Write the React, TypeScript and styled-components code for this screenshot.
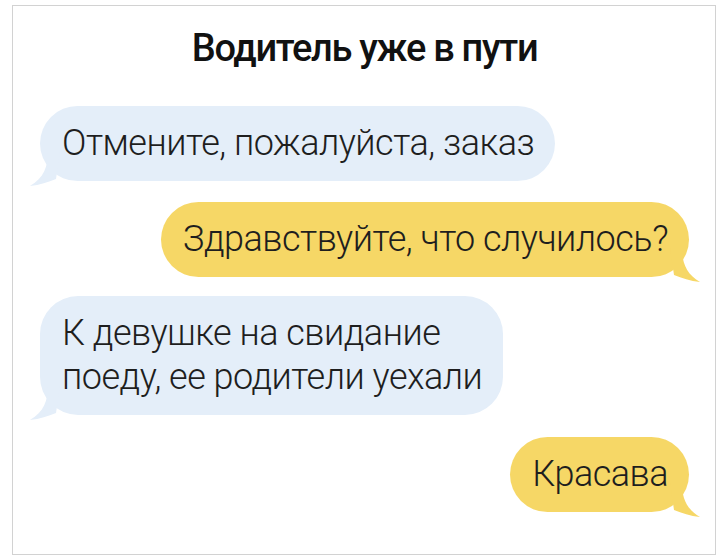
import React from "react";
import styled, { createGlobalStyle } from "styled-components";

const Global = createGlobalStyle`
  html, body { margin: 0; padding: 0; background: #ffffff; }
  body { font-family: Roboto, "Noto Sans", sans-serif; color: #1d1d1d; }
`;

const Frame = styled.div`
  box-sizing: border-box;
  margin: 5px 0 0 12px;
  width: 704px;
  height: 550px;
  border: 1px solid #d2d2d2;
  display: flex;
  flex-direction: column;
  padding: 0 26px 0 27px;
`;

const Title = styled.h1`
  margin: 20px 0 0;
  font-family: Roboto, sans-serif;
  font-weight: 500;
  font-size: 38px;
  line-height: 44px;
  text-align: center;
  color: #111;
  letter-spacing: -1.3px;
`;

const Thread = styled.div`
  display: flex;
  flex-direction: column;
  margin-top: 36px;
`;

type Side = "in" | "out";

const Row = styled.div<{ $side: Side; $gap: number }>`
  display: flex;
  justify-content: ${(p) => (p.$side === "in" ? "flex-start" : "flex-end")};
  margin-top: ${(p) => p.$gap}px;
`;

const Bubble = styled.div<{ $side: Side }>`
  position: relative;
  background: ${(p) => (p.$side === "in" ? "#e4eef9" : "#f6d766")};
  border-radius: 38px;
  padding: 15px 21px 16px 22px;
  font-family: Roboto, sans-serif;
  font-weight: 300;
  font-size: 36px;
  line-height: 44px;
  letter-spacing: -0.5px;
  color: #1e1e1e;
`;

const TailSvg = styled.svg<{ $side: Side }>`
  position: absolute;
  bottom: -5px;
  width: 30px;
  height: 34px;
  ${(p) => (p.$side === "in" ? "left: -10px;" : "right: -11px; transform: scaleX(-1);")}
`;

const Tail = ({ side, color }: { side: Side; color: string }) => (
  <TailSvg $side={side} viewBox="0 0 30 34">
    <path
      d="M18 0 C 18 14, 14 26, 0 34 C 10 33, 18 30, 26 27 L 30 0 Z"
      fill={color}
    />
  </TailSvg>
);

const msgs: { side: Side; text: React.ReactNode; gap: number }[] = [
  { side: "in", text: "Отмените, пожалуйста, заказ", gap: 0 },
  { side: "out", text: "Здравствуйте, что случилось?", gap: 21 },
  {
    side: "in",
    text: (
      <>
        К девушке на свидание
        <br />
        поеду, ее родители уехали
      </>
    ),
    gap: 19,
  },
  { side: "out", text: "Красава", gap: 22 },
];

export default function App() {
  return (
    <>
      <Global />
      <Frame>
        <Title>Водитель уже в пути</Title>
        <Thread>
          {msgs.map((m, i) => (
            <Row key={i} $side={m.side} $gap={m.gap}>
              <Bubble $side={m.side}>
                {m.text}
                <Tail side={m.side} color={m.side === "in" ? "#e4eef9" : "#f6d766"} />
              </Bubble>
            </Row>
          ))}
        </Thread>
      </Frame>
    </>
  );
}
